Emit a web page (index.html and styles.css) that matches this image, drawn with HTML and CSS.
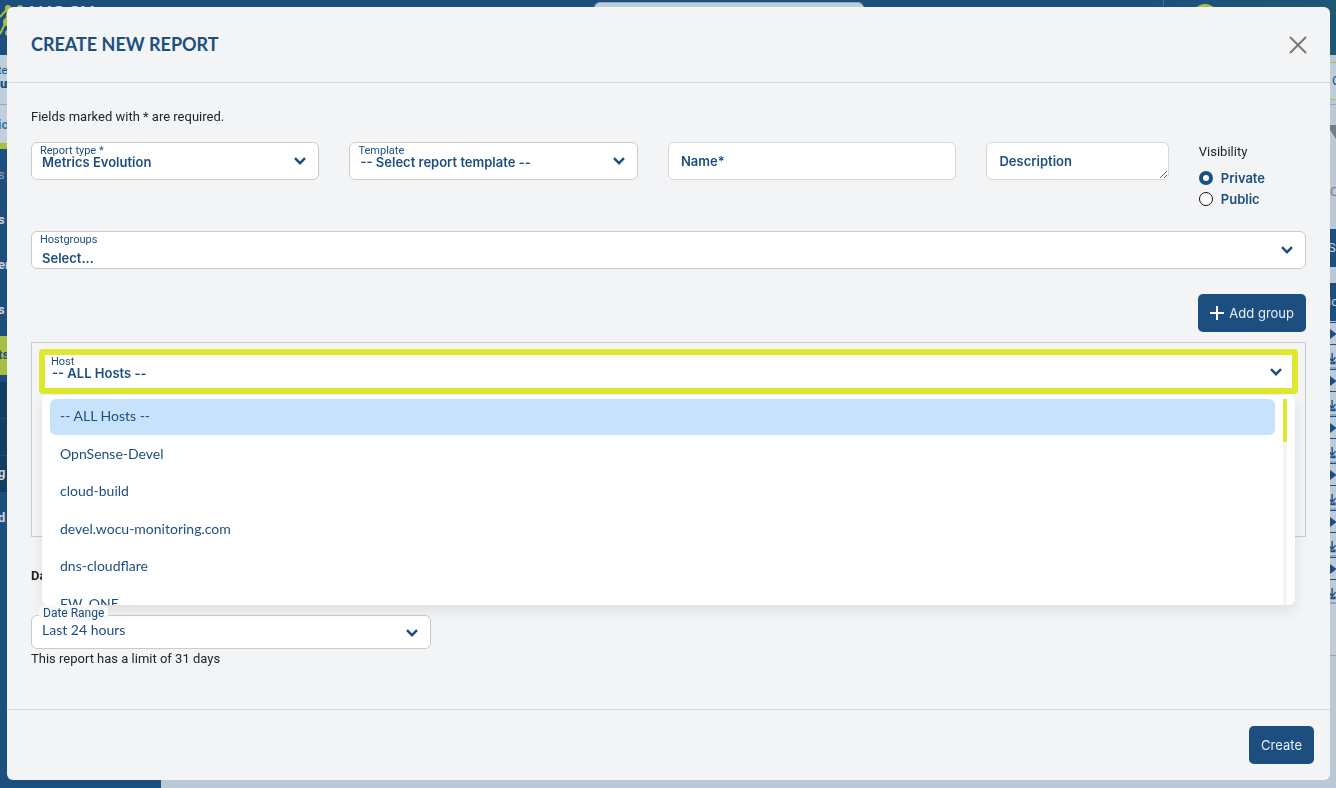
FILE: index.html
```html
<!DOCTYPE html>
<html lang="en">
<head>
<meta charset="utf-8">
<title>Create new report</title>
<link rel="stylesheet" href="styles.css">
</head>
<body>
<svg class="defs" aria-hidden="true">
  <symbol id="chevron" viewBox="0 0 12 8"><path d="M1 1.2 6 6.2 11 1.2" fill="none" stroke="currentColor" stroke-width="2.4"/></symbol>
  <symbol id="play" viewBox="0 0 6 12"><path d="M0 1 6 5.500v1L0 11z" fill="currentColor"/></symbol>
  <symbol id="download" viewBox="0 0 6 14"><path d="M2 0v9M-2 5l4 4.500 4-4.500" fill="none" stroke="currentColor" stroke-width="1.600"/><path d="M0 10h1l1 1.500L4 10h2v3H0z" fill="currentColor"/></symbol>
</svg>

<div class="app" aria-hidden="true">
  <header class="topbar">
    <div class="brand">
      <svg class="brand-mark" width="28" height="40" viewBox="0 0 28 40"><path d="M0 17 8 8M0 34l6-12 2-13M20 7l-6 9" stroke="#a9be45" stroke-width="2" fill="none"/><g fill="#a9be45"><circle cx="8" cy="8" r="3"/><circle cx="20" cy="8" r="3"/><circle cx="7" cy="22" r="4"/><circle cx="8" cy="33" r="3"/></g></svg>
      <span class="brand-name">WOCU</span>
    </div>
    <div class="top-search"></div>
    <div class="account"><span class="avatar"></span></div>
  </header>
  <div class="columns">
    <nav class="sidebar">
      <div class="site"><span class="site-label">te</span><b>u-</b></div>
      <div class="side-title">ic</div>
      <div class="side-item first muted">s</div>
      <div class="side-item">s</div>
      <div class="side-item">er</div>
      <div class="side-item">s</div>
      <div class="side-item active">ts</div>
      <div class="side-sub"><div></div><div></div><div>g</div></div>
      <div class="side-item last">d</div>
    </nav>
    <div class="rail">
      <div class="rail-site">C</div>
      <div class="rail-filter"><svg width="6" height="14" viewBox="0 0 6 14"><path d="M0 0h6v14L0 5z" fill="#6e7d8a"/></svg><span>C</span></div>
      <div class="rail-block">Se</div>
      <div class="rail-block">ic</div>
      <div class="rail-rows">
        <div class="rail-row"><span><svg><use href="#play"/></svg></span><svg><use href="#download"/></svg></div>
        <div class="rail-row"><span><svg><use href="#play"/></svg></span><svg><use href="#download"/></svg></div>
        <div class="rail-row"><span><svg><use href="#play"/></svg></span><svg><use href="#download"/></svg></div>
        <div class="rail-row"><span><svg><use href="#play"/></svg></span><svg><use href="#download"/></svg></div>
        <div class="rail-row"><span><svg><use href="#play"/></svg></span><svg><use href="#download"/></svg></div>
        <div class="rail-row"><span><svg><use href="#play"/></svg></span><svg><use href="#download"/></svg></div>
      </div>
      <div class="rail-foot"></div>
    </div>
  </div>
</div>

<div class="overlay">
  <form class="modal" role="dialog" aria-labelledby="title">
    <div class="modal-head">
      <h1 id="title">CREATE NEW REPORT</h1>
      <button class="close" type="button" aria-label="Close"><svg width="18" height="18" viewBox="0 0 18 18"><path d="M1.500 1.500 16.500 16.500M16.500 1.500 1.500 16.500" stroke="#777" stroke-width="2" stroke-linecap="round"/></svg></button>
    </div>

    <div class="modal-body">
      <p class="note">Fields marked with * are required.</p>
      <div class="fields">
        <div class="field">
          <label for="type">Report type *</label>
          <select id="type"><option>Metrics Evolution</option></select>
          <svg class="chevron"><use href="#chevron"/></svg>
        </div>
        <div class="field">
          <label for="template">Template</label>
          <select id="template"><option>-- Select report template --</option></select>
          <svg class="chevron"><use href="#chevron"/></svg>
        </div>
        <div class="field"><input type="text" placeholder="Name*" aria-label="Name"></div>
        <div class="field"><textarea placeholder="Description" aria-label="Description"></textarea></div>
        <fieldset class="visibility">
          <legend>Visibility</legend>
          <label><input type="radio" name="visibility" checked>Private</label>
          <label><input type="radio" name="visibility">Public</label>
        </fieldset>
      </div>

      <div class="field hostgroups">
        <label for="groups">Hostgroups</label>
        <select id="groups"><option>Select...</option></select>
        <svg class="chevron"><use href="#chevron"/></svg>
      </div>

      <div class="actions">
        <button class="btn" type="button"><svg width="14" height="14" viewBox="0 0 14 14"><path d="M7 0v14M0 7h14" stroke="#fff" stroke-width="2"/></svg>Add group</button>
      </div>

      <div class="group">
        <div class="field host">
          <label for="host">Host</label>
          <select id="host"><option>-- ALL Hosts --</option></select>
          <svg class="chevron"><use href="#chevron"/></svg>
          <div class="menu">
            <ul role="listbox" aria-label="Host">
              <li role="option" aria-selected="true">-- ALL Hosts --</li>
              <li role="option">OpnSense-Devel</li>
              <li role="option">cloud-build</li>
              <li role="option">devel.wocu-monitoring.com</li>
              <li role="option">dns-cloudflare</li>
              <li role="option">FW_ONE</li>
            </ul>
            <div class="track"><div class="thumb"></div></div>
          </div>
        </div>
      </div>

      <h2>Date</h2>
      <div class="field date">
        <label for="range">Date Range</label>
        <select id="range"><option>Last 24 hours</option></select>
        <svg class="chevron"><use href="#chevron"/></svg>
      </div>
      <p class="limit">This report has a limit of 31 days</p>
    </div>

    <div class="modal-foot"><button class="btn" type="submit">Create</button></div>
  </form>
</div>
</body>
</html>
```

FILE: styles.css
```css
:root {
  --navy: #1c4f80;
  --lime: #dfe82f;
  --line: #c8cacc;
  --panel: #f2f4f6;
  --font: Roboto, "Noto Sans", sans-serif;
  --font-list: Lato, "Noto Sans", sans-serif;
  --font-strong: Inter, "Noto Sans", sans-serif;
}
* { box-sizing: border-box; }
body { margin: 0; font: 13px/18px var(--font); color: #212529; background: #bbc8d5; }
h1, h2, p, ul, fieldset { margin: 0; padding: 0; border: 0; }
button, input, select, textarea { font: inherit; color: inherit; }
.defs { position: absolute; width: 0; height: 0; }

/* Page behind the dialog */
.app { display: flex; flex-direction: column; height: 100vh; overflow: hidden; }
.topbar { display: grid; grid-template-columns: 594px 1fr 472px; height: 55px; background: linear-gradient(90deg, #1c4f7e 85%, #1c5873); }
.brand { display: flex; gap: 2px; align-items: flex-start; }
.brand-name { padding-top: 3px; font: 700 20px/20px Lato, sans-serif; color: #cbd8e2; }
.top-search { height: 36px; margin-top: 2px; border: 1px solid #8fa9b8; border-radius: 6px; background: #bccfda; }
.account { display: flex; justify-content: flex-end; justify-self: end; width: 55px; margin-right: 118px; padding-top: 4px; border-left: 1px solid #3d7680; }
.avatar { width: 26px; height: 26px; border-radius: 50%; background: #a9be45; }
.columns { display: flex; flex: 1; justify-content: space-between; }
.sidebar { width: 161px; background: #1c4f7e; color: #c6d3de; font-weight: 700; text-indent: -2px; }
.site { height: 50px; border-top: 7px solid #bccfda; border-bottom: 1px solid #95a9b5; background: #bccfda; color: var(--navy); line-height: 13px; }
.site-label { display: block; font-size: 11px; font-weight: 400; padding-top: 2px; }
.side-title { height: 44px; padding-top: 11px; border-bottom: 6px solid #a9be45; background: #c2cfdb; color: #3477ad; }
.side-item { height: 45px; line-height: 43px; }
.side-item.first { height: 49px; line-height: 52px; }
.muted { color: #8d9fae; font-weight: 400; }
.side-item.active { height: 39px; margin-top: 3px; line-height: 37px; background: #a9be45; color: #1c4f7e; }
.side-sub { margin-top: 7px; background: #123e60; }
.side-sub div { height: 37px; line-height: 34px; border-bottom: 1px solid #1c4f7e; }
.side-item.last { line-height: 50px; }
.rail { display: flex; flex-direction: column; width: 6px; overflow: hidden; color: var(--navy); background: #bbc8d5; }
.rail-site { height: 38px; margin-top: 7px; padding-left: 2px; border: solid #a9be45; border-width: 1px 0; line-height: 36px; background: #bccfda; }
.rail-filter { display: flex; flex-direction: column; height: 125px; margin-top: 4px; padding-top: 20px; gap: 44px; border-top: 1px solid #95a9b5; color: #6e7d8a; }
.rail-block { height: 38px; margin-bottom: 16px; line-height: 38px; background: #1c4f7e; color: #c6d3de; text-indent: -2px; }
.rail-block + .rail-block { margin-bottom: 1px; }
.rail-row { display: flex; flex-direction: column; gap: 8px; height: 47px; border-bottom: 2px solid #95a9b5; background: #bccbd8; }
.rail-row span { height: 23px; padding-top: 5px; border: solid #1c4f7e; border-width: 1px 0; }
.rail-row svg { display: block; width: 6px; height: 12px; }
.rail-foot { height: 52px; border-bottom: 1px solid #95a9b5; background: #c0cdd9; }

/* Dialog */
.overlay { position: fixed; inset: 0; padding: 7px 6px 8px 7px; }
.modal { display: flex; flex-direction: column; height: 100%; border-radius: 6px; background: var(--panel); }
.modal-head { display: flex; justify-content: space-between; align-items: center; height: 76px; padding: 0 23px 0 24px; border-bottom: 1px solid #d5d8db; }
h1 { padding-bottom: 2px; font: 700 18px/24px Lato, "Noto Sans", sans-serif; color: var(--navy); }
.close { display: flex; padding: 0; border: 0; background: none; }
.modal-body { flex: 1; padding: 25px 24px 0; }
.note { margin-bottom: 16px; }

.fields { display: grid; grid-template-columns: repeat(3, 288fr) 182fr 107fr; gap: 30px; align-items: start; height: 89px; }
.field { position: relative; display: flex; color: var(--navy); font-family: var(--font-strong); font-weight: 600; }
.field select, .field input, .field textarea { width: 100%; height: 38px; margin: 0; border: 1px solid var(--line); border-radius: 6px; background: #fff; outline: 0; }
.field select { padding: 2px 10px 0; appearance: none; }
.field input, .field textarea { padding: 9px 12px; border-color: #d5d8db; }
::placeholder { color: var(--navy); opacity: 1; }
.field > label { position: absolute; top: 1px; left: 9px; font: 400 11px/15px var(--font); }
.chevron { position: absolute; top: 15px; right: 13px; width: 12px; height: 8px; pointer-events: none; }

.visibility > legend { padding: 0; line-height: 20px; margin-bottom: 5px; }
.visibility label { display: flex; gap: 8px; align-items: center; height: 21px; font-family: var(--font-strong); font-weight: 600; color: var(--navy); }
.visibility input { width: 14px; height: 14px; margin: 0; appearance: none; border: 1px solid #111; border-radius: 50%; background: #fff; }
.visibility input:checked { border: 4px solid var(--navy); }

.hostgroups select { padding-top: 16px; }
.actions { display: flex; justify-content: flex-end; margin: 25px 0 10px; }
.btn { display: flex; align-items: center; gap: 5px; height: 38px; padding: 0 12px; border: 0; border-radius: 5px; background: var(--navy); color: #e9eff5; font: 400 13px/18px var(--font-strong); }

.group { height: 195px; padding: 6px 7px; border: 1px solid var(--line); }
.host { border: 6px solid var(--lime); border-radius: 4px; background: #fff; }
.host select { height: 33px; padding: 2px 7px 0; border: 0; border-radius: 0; }
.host > label { top: -1px; left: 6px; }
.host .chevron { top: 13px; right: 10px; }
.menu { position: absolute; z-index: 1; top: 40px; left: -3px; right: -3px; display: flex; gap: 8px; height: 210px; padding: 4px 8px 0; overflow: hidden; border-radius: 6px; background: #fff; font: 400 14px/18px var(--font-list); box-shadow: 0 6px 14px rgba(0, 0, 0, .09); }
.menu ul { display: flex; flex: 1; flex-direction: column; gap: 2px; list-style: none; line-height: 1.25; }
.menu li { padding: 8px 10px 10px; border-radius: 6px; }
.menu li[aria-selected="true"] { background: #c6e3fb; }
.track { width: 4px; border-radius: 2px; background: #f2f4f6; }
.thumb { height: 43px; background: var(--lime); }

h2 { margin: 30px 0; font-size: 13px; line-height: 18px; }
.date { max-width: 400px; }
.date select { height: 34px; padding: 0 10px 5px; font: 400 14px/18px var(--font-list); }
.date > label { z-index: 2; top: -10px; left: 8px; padding: 0 4px; border-radius: 5px; background: #f8f8f8; font-size: 12px; line-height: 16px; }
.date .chevron { top: 14px; }
.limit { padding-top: 1px; }
.modal-foot { display: flex; justify-content: flex-end; padding: 16px; border-top: 1px solid #d5d8db; }
```
